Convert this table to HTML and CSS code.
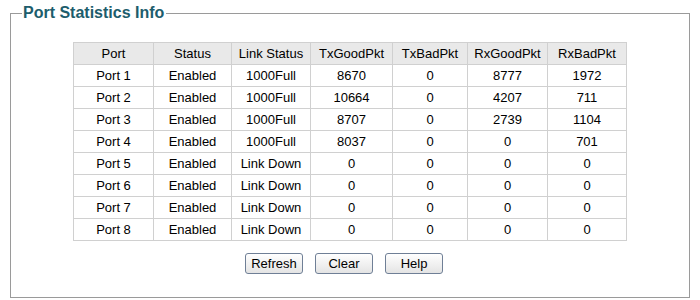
FILE: index.html
```html
<!DOCTYPE html>
<html lang="en">
<head>
    <meta charset="UTF-8">
    <meta name="viewport" content="width=device-width, initial-scale=1.0">
    <title>Port Statistics Info</title>
    <link rel="stylesheet" href="styles.css">
</head>
<body>

    <fieldset class="panel">
        <legend>Port Statistics Info</legend>

        <table class="stats">
            <thead>
                <tr>
                    <th class="c-port">Port</th>
                    <th class="c-status">Status</th>
                    <th class="c-link">Link Status</th>
                    <th class="c-txg">TxGoodPkt</th>
                    <th class="c-txb">TxBadPkt</th>
                    <th class="c-rxg">RxGoodPkt</th>
                    <th class="c-rxb">RxBadPkt</th>
                </tr>
            </thead>
            <tbody>
                <tr><td>Port 1</td><td>Enabled</td><td>1000Full</td><td>8670</td><td>0</td><td>8777</td><td>1972</td></tr>
                <tr><td>Port 2</td><td>Enabled</td><td>1000Full</td><td>10664</td><td>0</td><td>4207</td><td>711</td></tr>
                <tr><td>Port 3</td><td>Enabled</td><td>1000Full</td><td>8707</td><td>0</td><td>2739</td><td>1104</td></tr>
                <tr><td>Port 4</td><td>Enabled</td><td>1000Full</td><td>8037</td><td>0</td><td>0</td><td>701</td></tr>
                <tr><td>Port 5</td><td>Enabled</td><td>Link Down</td><td>0</td><td>0</td><td>0</td><td>0</td></tr>
                <tr><td>Port 6</td><td>Enabled</td><td>Link Down</td><td>0</td><td>0</td><td>0</td><td>0</td></tr>
                <tr><td>Port 7</td><td>Enabled</td><td>Link Down</td><td>0</td><td>0</td><td>0</td><td>0</td></tr>
                <tr><td>Port 8</td><td>Enabled</td><td>Link Down</td><td>0</td><td>0</td><td>0</td><td>0</td></tr>
            </tbody>
        </table>

        <div class="actions">
            <button type="button" class="btn">Refresh</button>
            <button type="button" class="btn">Clear</button>
            <button type="button" class="btn">Help</button>
        </div>
    </fieldset>

</body>
</html>
```

FILE: styles.css
```css
* {
    margin: 0;
    padding: 0;
    box-sizing: border-box;
    font-family: 'Liberation Sans', Arial, sans-serif;
}

body {
    background: #fff;
    color: #000;
}

.panel {
    width: 680px;
    height: 294px;
    margin: 4px 10px 0;
    padding: 20px 11px 0;
    border: 1px solid #9a9a9a;
}

.panel legend {
    padding: 0 2px 0 1px;
    font-size: 16px;
    font-weight: bold;
    color: #1d5d6c;
}

.stats {
    margin: 0 auto;
    border-collapse: collapse;
    table-layout: fixed;
    font-size: 13px;
}

.stats th,
.stats td {
    height: 22px;
    border: 1px solid #d0d0d0;
    text-align: center;
    font-weight: normal;
    padding: 0;
}

.stats th {
    background: #e9e9e9;
}

.c-port { width: 80px; }
.c-status { width: 78px; }
.c-link { width: 79px; }
.c-txg { width: 82px; }
.c-txb { width: 75px; }
.c-rxg { width: 80px; }
.c-rxb { width: 79px; }

.actions {
    display: flex;
    justify-content: center;
    gap: 12px;
    margin-top: 12px;
    padding-right: 12px;
}

.btn {
    width: 58px;
    height: 21px;
    font-size: 13px;
    color: #000;
    border: 1px solid #6f7f96;
    border-radius: 3px;
    background: linear-gradient(#ffffff, #e4e4e4);
    cursor: pointer;
}

.btn:hover {
    background: linear-gradient(#ffffff, #d6d6d6);
}
```
